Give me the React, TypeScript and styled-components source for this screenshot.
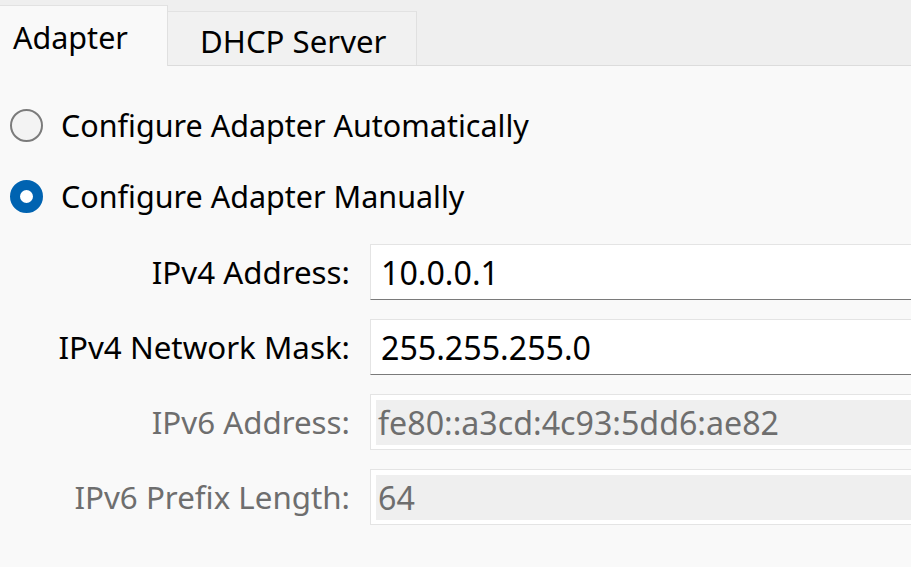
import React from "react";
import styled, { createGlobalStyle } from "styled-components";

const GlobalStyle = createGlobalStyle`
  html, body {
    margin: 0;
    padding: 0;
    background: #f9f9f9;
    overflow: hidden;
  }
  body {
    font-family: "Noto Sans", "Open Sans", sans-serif;
    color: #000;
  }
`;

const Page = styled.div`
  width: 911px;
  height: 567px;
  background: #f9f9f9;
  overflow: hidden;
`;

const TabBar = styled.div`
  display: flex;
  align-items: flex-end;
  height: 65px;
  background: #efefef;
  border-bottom: 1px solid #dcdcdc;
`;

const Tab = styled.div<{ $active?: boolean }>`
  box-sizing: border-box;
  display: flex;
  align-items: center;
  font-size: ${(p) => (p.$active ? "30.5px" : "31.2px")};
  width: ${(p) => (p.$active ? "168px" : "249px")};
  height: ${(p) => (p.$active ? "61px" : "54px")};
  padding-left: ${(p) => (p.$active ? "13px" : "32px")};
  padding-top: ${(p) => (p.$active ? "1px" : "5px")};
  margin-bottom: ${(p) => (p.$active ? "-1px" : "0")};
  background: ${(p) => (p.$active ? "#f9f9f9" : "#f1f1f1")};
  border-top: 1px solid #e2e2e2;
  border-right: 1px solid #e0e0e0;
`;

const Body = styled.div`
  display: flex;
  flex-direction: column;
  padding: 41px 0 0 10px;
`;

const RadioRow = styled.label`
  display: flex;
  align-items: center;
  gap: 18px;
  height: 36px;
  font-size: 30.5px;
  margin-bottom: 35px;
`;

const Radio = styled.span<{ $checked?: boolean }>`
  box-sizing: border-box;
  width: 33px;
  height: 33px;
  border-radius: 50%;
  flex-shrink: 0;
  background: ${(p) => (p.$checked ? "#fff" : "#f3f3f3")};
  border: ${(p) => (p.$checked ? "10.5px solid #0063b1" : "2px solid #7b7b7b")};
`;

const Fields = styled.div`
  display: flex;
  flex-direction: column;
  gap: 19px;
  margin-top: -5px;
  margin-left: -10px;
`;

const FieldRow = styled.div`
  display: grid;
  grid-template-columns: 350px 1fr;
  column-gap: 20px;
  align-items: center;
`;

const Label = styled.div<{ $disabled?: boolean }>`
  text-align: right;
  font-size: 31.3px;
  white-space: nowrap;
  color: ${(p) => (p.$disabled ? "#6e6e6e" : "#000")};
`;

const Input = styled.div<{ $disabled?: boolean }>`
  box-sizing: border-box;
  height: 56px;
  display: flex;
  align-items: center;
  font-size: 32.2px;
  background: #fff;
  border: 1px solid #e4e4e4;
  border-right: none;
  border-bottom: ${(p) => (p.$disabled ? "1px solid #e4e4e4" : "1px solid #7a7a7a")};
  padding: ${(p) => (p.$disabled ? "5px 0 4px 5px" : "0 0 0 10px")};
  color: ${(p) => (p.$disabled ? "#6e6e6e" : "#000")};
`;

const InputFill = styled.div`
  flex: 1;
  align-self: stretch;
  display: flex;
  align-items: center;
  padding-left: 2px;
  background: #efefef;
`;

const fields = [
  { label: "IPv4 Address:", value: "10.0.0.1" },
  { label: "IPv4 Network Mask:", value: "255.255.255.0" },
  { label: "IPv6 Address:", value: "fe80::a3cd:4c93:5dd6:ae82", disabled: true },
  { label: "IPv6 Prefix Length:", value: "64", disabled: true },
];

const App = () => {
  return (
    <Page>
      <GlobalStyle />
      <TabBar>
        <Tab $active>Adapter</Tab>
        <Tab>DHCP Server</Tab>
      </TabBar>
      <Body>
        <RadioRow>
          <Radio />
          Configure Adapter Automatically
        </RadioRow>
        <RadioRow>
          <Radio $checked />
          Configure Adapter Manually
        </RadioRow>
        <Fields>
          {fields.map((f, index) => (
            <FieldRow key={index}>
              <Label $disabled={f.disabled}>{f.label}</Label>
              <Input $disabled={f.disabled}>
                {f.disabled ? <InputFill>{f.value}</InputFill> : f.value}
              </Input>
            </FieldRow>
          ))}
        </Fields>
      </Body>
    </Page>
  );
};

export default App;
